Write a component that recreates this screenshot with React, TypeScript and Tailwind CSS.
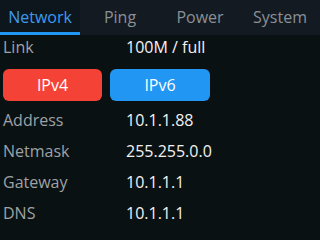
import React from "react";

const tabs = ["Network", "Ping", "Power", "System"];
const rows = [
  ["Address", "10.1.1.88"],
  ["Netmask", "255.255.0.0"],
  ["Gateway", "10.1.1.1"],
  ["DNS", "10.1.1.1"],
];

export default function App() {
  return (
    <div
      className="w-[320px] h-[240px] bg-[#0a1113] overflow-hidden flex flex-col text-[16px]"
      style={{ fontFamily: '"Open Sans", sans-serif' }}
    >
      <div className="flex h-[35px] bg-[#131a21]">
        {tabs.map((t, i) => (
          <div
            key={t}
            className={
              i === 0
                ? "w-[80px] flex items-center justify-center border-b-[3px] border-[#2196f3] bg-[#0d161d] text-[#3d9bf0] pt-[2px]"
                : "w-[80px] flex items-center justify-center text-[#8a9096] pb-[1px]"
            }
          >
            {t}
          </div>
        ))}
      </div>
      <div className="flex items-center h-[24px] px-[3px]">
        <div className="w-[123px] text-[#9ea2a6]">Link</div>
        <div className="text-[#f2f2f2]">100M / full</div>
      </div>
      <div className="flex gap-[8px] px-[3px] mt-[10px]">
        <div className="w-[99px] h-[32px] rounded-[6px] bg-[#f44336] text-white flex items-center justify-center">
          IPv4
        </div>
        <div className="w-[100px] h-[32px] rounded-[6px] bg-[#2196f3] text-white flex items-center justify-center">
          IPv6
        </div>
      </div>
      <div className="mt-[3px] flex flex-col">
        {rows.map(([k, v]) => (
          <div key={k} className="flex items-center h-[31px] px-[3px]">
            <div className="w-[123px] text-[#9ea2a6]">{k}</div>
            <div className="text-[#f2f2f2]">{v}</div>
          </div>
        ))}
      </div>
    </div>
  );
}
